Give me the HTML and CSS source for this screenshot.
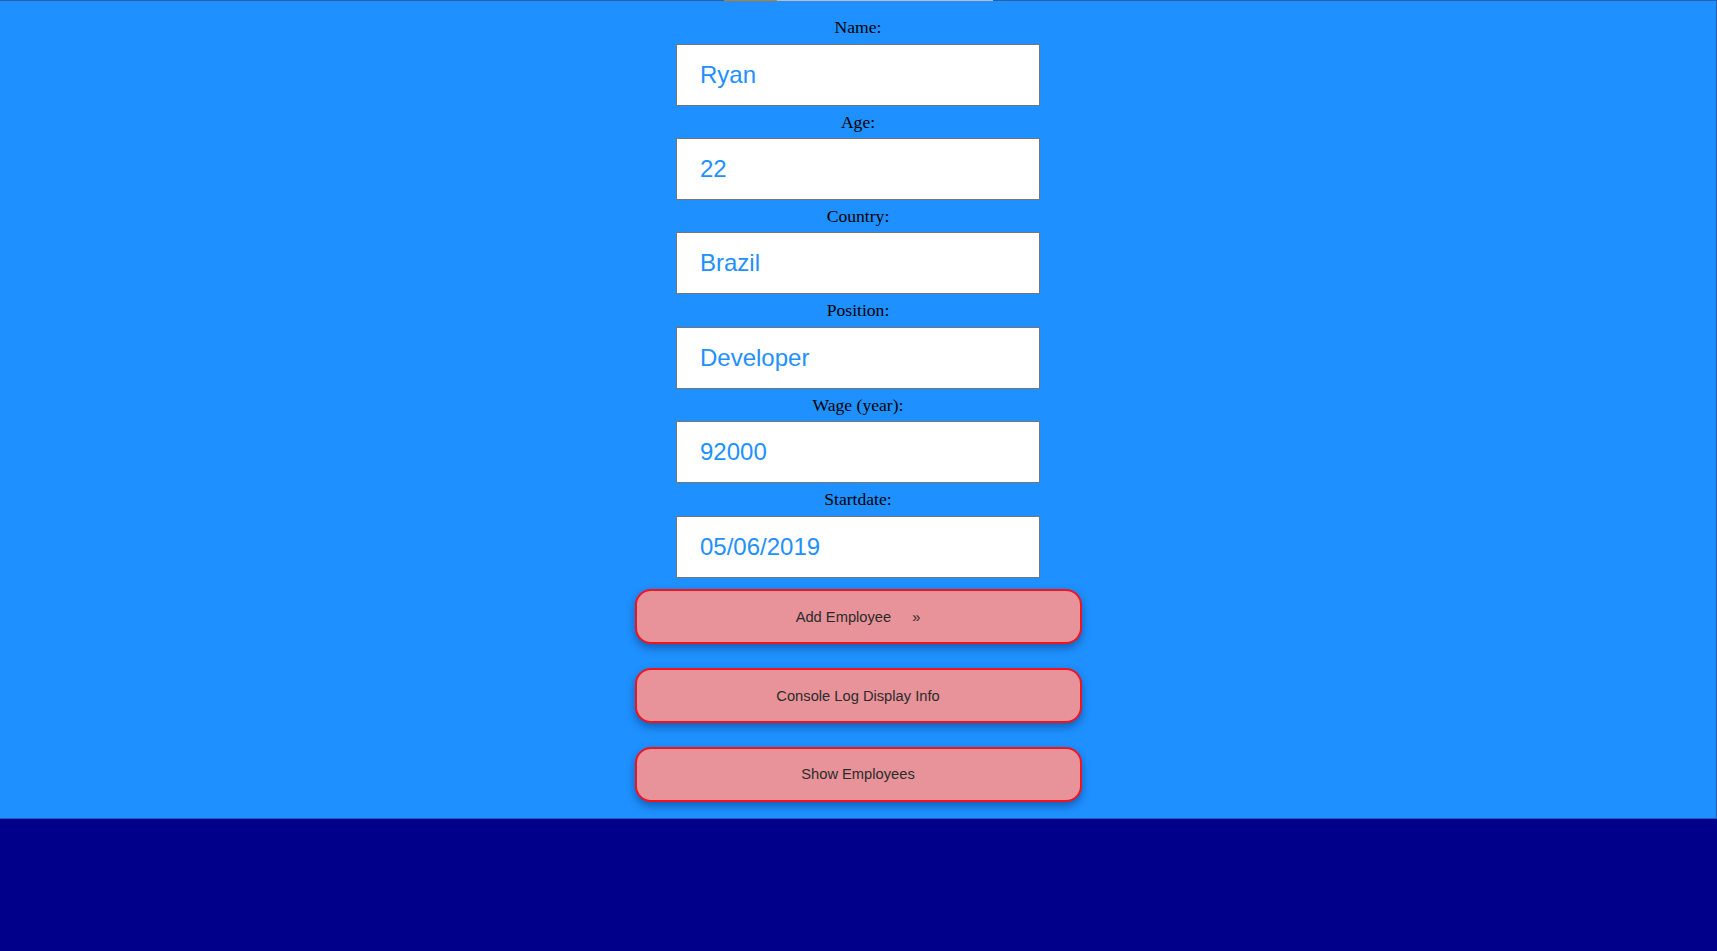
FILE: index.html
```html
<!DOCTYPE html>
<html>
<head>
<meta charset="utf-8">
<link rel="stylesheet" href="styles.css">
</head>
<body>
<div class="page">
  <div class="topbar"><div class="progress"><div class="progress-fill"></div></div></div>
  <form class="form">
    <div class="field"><label class="label">Name:</label><input class="input" type="text" value="Ryan"></div>
    <div class="field"><label class="label">Age:</label><input class="input" type="text" value="22"></div>
    <div class="field"><label class="label">Country:</label><input class="input" type="text" value="Brazil"></div>
    <div class="field"><label class="label">Position:</label><input class="input" type="text" value="Developer"></div>
    <div class="field"><label class="label">Wage (year):</label><input class="input" type="text" value="92000"></div>
    <div class="field"><label class="label">Startdate:</label><input class="input" type="text" value="05/06/2019"></div>
    <div class="buttons">
      <button type="button" class="btn">Add Employee<span class="arrow">»</span></button>
      <button type="button" class="btn">Console Log Display Info</button>
      <button type="button" class="btn">Show Employees</button>
    </div>
  </form>
</div>
<div class="footer"></div>
</body>
</html>
```

FILE: styles.css
```css
html, body {
  margin: 0;
  padding: 0;
  height: 100%;
}
body {
  display: flex;
  flex-direction: column;
  background: #00008b;
}
.page {
  background: #1e90ff;
  border-right: 1px solid #2a5fa8;
  border-bottom: 1px solid #1a5cc0;
  height: 819px;
  box-sizing: border-box;
  flex: none;
}
.topbar {
  height: 1px;
  background: #2a5fa8;
  display: flex;
  justify-content: center;
}
.progress {
  width: 269px;
  height: 1px;
  background: #bdbdbd;
}
.progress-fill {
  width: 53px;
  height: 1px;
  background: #c97a1a;
}
.form {
  display: flex;
  flex-direction: column;
  align-items: center;
  padding-top: 10.2px;
}
.field {
  display: flex;
  flex-direction: column;
  align-items: center;
}
.label {
  display: block;
  height: 32.4px;
  line-height: 32.4px;
  font-family: "Liberation Serif", "Times New Roman", serif;
  font-size: 17.6px;
  color: #000;
  text-align: center;
}
.input {
  box-sizing: border-box;
  width: 364px;
  height: 62px;
  margin: 0;
  padding: 0 0 0 23px;
  border: 1px solid #767676;
  background: #fff;
  font-family: "Liberation Sans", Arial, sans-serif;
  font-size: 24px;
  color: #1e90ff;
  outline: none;
}
.buttons {
  display: flex;
  flex-direction: column;
  align-items: center;
  gap: 23.8px;
  padding-top: 11.7px;
}
.btn {
  box-sizing: border-box;
  width: 447px;
  height: 55px;
  margin: 0;
  border: 2px solid #f3131d;
  border-radius: 16px;
  background: #e8939a;
  color: #2b2b2b;
  font-family: "Liberation Sans", Arial, sans-serif;
  font-size: 14.7px;
  box-shadow: 0 4px 8px rgba(0, 0, 40, 0.35);
  cursor: pointer;
}
.arrow {
  margin-left: 21px;
}
.footer {
  flex: 1;
  background: #00008b;
}
```
